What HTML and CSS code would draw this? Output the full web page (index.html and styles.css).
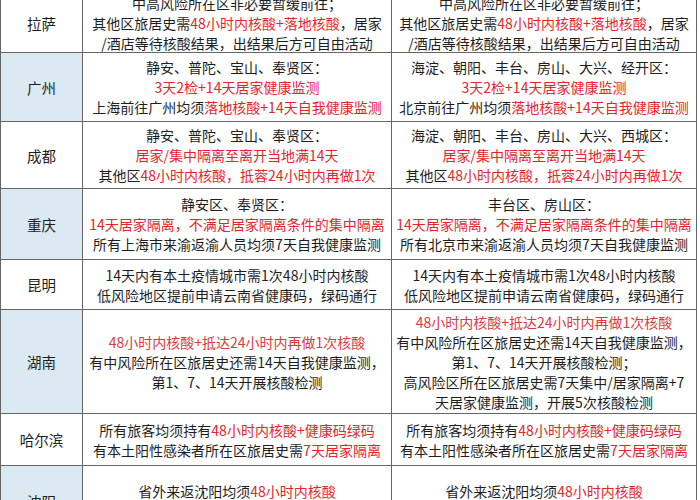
FILE: index.html
```html
<!DOCTYPE html>
<html lang="zh-CN">
<head>
<meta charset="utf-8">
<link rel="stylesheet" href="styles.css">
</head>
<body>
<div class="table">
  <div class="city">拉萨</div>
  <div class="cell">
    <p>中高风险所在区非必要暂缓前往；</p>
    <p>其他区旅居史需<span class="r">48小时内核酸+落地核酸</span>，居家</p>
    <p>/酒店等待核酸结果，出结果后方可自由活动</p>
  </div>
  <div class="cell">
    <p>中高风险所在区非必要暂缓前往；</p>
    <p>其他区旅居史需<span class="r">48小时内核酸+落地核酸</span>，居家</p>
    <p>/酒店等待核酸结果，出结果后方可自由活动</p>
  </div>

  <div class="city blue">广州</div>
  <div class="cell">
    <p>静安、普陀、宝山、奉贤区：</p>
    <p class="r">3天2检+14天居家健康监测</p>
    <p>上海前往广州均须<span class="r">落地核酸+14天自我健康监测</span></p>
  </div>
  <div class="cell">
    <p>海淀、朝阳、丰台、房山、大兴、经开区：</p>
    <p class="r">3天2检+14天居家健康监测</p>
    <p>北京前往广州均须<span class="r">落地核酸+14天自我健康监测</span></p>
  </div>

  <div class="city">成都</div>
  <div class="cell">
    <p>静安、普陀、宝山、奉贤区：</p>
    <p class="r">居家/集中隔离至离开当地满14天</p>
    <p>其他区<span class="r">48小时内核酸，抵蓉24小时内再做1次</span></p>
  </div>
  <div class="cell">
    <p>海淀、朝阳、丰台、房山、大兴、西城区：</p>
    <p class="r">居家/集中隔离至离开当地满14天</p>
    <p>其他区<span class="r">48小时内核酸，抵蓉24小时内再做1次</span></p>
  </div>

  <div class="city blue">重庆</div>
  <div class="cell">
    <p>静安区、奉贤区：</p>
    <p class="r">14天居家隔离，不满足居家隔离条件的集中隔离</p>
    <p>所有上海市来渝返渝人员均须7天自我健康监测</p>
  </div>
  <div class="cell">
    <p>丰台区、房山区：</p>
    <p class="r">14天居家隔离，不满足居家隔离条件的集中隔离</p>
    <p>所有北京市来渝返渝人员均须7天自我健康监测</p>
  </div>

  <div class="city">昆明</div>
  <div class="cell">
    <p>14天内有本土疫情城市需1次48小时内核酸</p>
    <p>低风险地区提前申请云南省健康码，绿码通行</p>
  </div>
  <div class="cell">
    <p>14天内有本土疫情城市需1次48小时内核酸</p>
    <p>低风险地区提前申请云南省健康码，绿码通行</p>
  </div>

  <div class="city blue">湖南</div>
  <div class="cell">
    <p class="r2">48小时内核酸+抵达24小时内再做1次核酸</p>
    <p>有中风险所在区旅居史还需14天自我健康监测，</p>
    <p>第1、7、14天开展核酸检测</p>
  </div>
  <div class="cell">
    <p class="r2">48小时内核酸+抵达24小时内再做1次核酸</p>
    <p>有中风险所在区旅居史还需14天自我健康监测，</p>
    <p>第1、7、14天开展核酸检测；</p>
    <p>高风险区所在区旅居史需7天集中/居家隔离+7</p>
    <p>天居家健康监测，开展5次核酸检测</p>
  </div>

  <div class="city">哈尔滨</div>
  <div class="cell">
    <p>所有旅客均须持有<span class="r">48小时内核酸+健康码绿码</span></p>
    <p>有本土阳性感染者所在区旅居史需<span class="r">7天居家隔离</span></p>
  </div>
  <div class="cell">
    <p>所有旅客均须持有<span class="r">48小时内核酸+健康码绿码</span></p>
    <p>有本土阳性感染者所在区旅居史需<span class="r">7天居家隔离</span></p>
  </div>

  <div class="city blue">沈阳</div>
  <div class="cell">
    <p>省外来返沈阳均须<span class="r">48小时内核酸</span></p>
    <p>中高风险所在区旅居史<span class="r">一律集中隔离14天</span></p>
  </div>
  <div class="cell">
    <p>省外来返沈阳均须<span class="r">48小时内核酸</span></p>
    <p>中高风险所在区旅居史<span class="r">一律集中隔离14天</span></p>
  </div>
</div>
</body>
</html>
```

FILE: styles.css
```css
html, body {
  margin: 0;
  padding: 0;
  background: #ffffff;
  overflow: hidden;
}

body {
  font-family: "Noto Sans CJK SC", "Noto Sans", sans-serif;
  font-size: 14px;
  color: #1e1e1e;
}

.table {
  display: grid;
  width: 697px;
  grid-template-columns: 81px 308px 304px;
  grid-template-rows: 58px 68px 66px 70px 49px 103px 51px 70px;
  gap: 1px;
  padding: 0 1px 1px 1px;
  box-sizing: border-box;
  background: #666666;
  margin-top: -6px;
}

.city, .cell {
  background: #ffffff;
  display: flex;
  flex-direction: column;
  justify-content: center;
  align-items: center;
  text-align: center;
  overflow: hidden;
}

.city {
  font-size: 14.5px;
}

.city.blue {
  background: #dbeaf2;
}

.cell p {
  margin: 0;
  line-height: 20px;
  white-space: nowrap;
}

.r {
  color: #e3262b;
}

.r2 {
  color: #dc3a3e;
}
```
